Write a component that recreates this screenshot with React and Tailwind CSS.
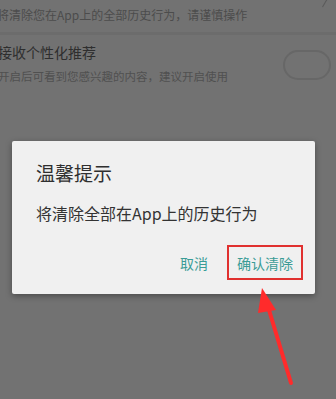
import React from "react";

export default function App() {
  const font = { fontFamily: '"Noto Sans CJK SC", "Noto Sans", sans-serif' };
  return (
    <div className="relative w-[336px] h-[399px] overflow-hidden bg-[#727272]" style={font}>
      {/* background page (dimmed) */}
      <div className="flex flex-col">
        <div className="relative h-[32px] flex items-start">
          <p className="text-[12px] leading-none text-[#4c4c4c] mt-[9px] -ml-[3px] whitespace-nowrap">将清除您在App上的全部历史行为，请谨慎操作</p>
          <div className="absolute right-[10px] -top-[4px] w-[8px] h-[10px] border-r border-[#5a5a5a] rotate-[30deg]" />
        </div>
        <div className="h-[3px] bg-[#6c6c6c]" />
        <div className="flex items-start justify-between h-[60px]">
          <div className="flex flex-col -ml-[2px]">
            <p className="text-[14px] leading-none text-[#2e2e2e] mt-[10px] whitespace-nowrap">接收个性化推荐</p>
            <p className="text-[11.5px] leading-none text-[#505050] mt-[12px] whitespace-nowrap">开启后可看到您感兴趣的内容，建议开启使用</p>
          </div>
          <div className="w-[48px] h-[30px] rounded-full border-2 border-[#676767] mr-[5px] mt-[15px]" />
        </div>
      </div>

      {/* dialog */}
      <div className="absolute left-[12px] top-[141px] w-[303px] h-[153px] bg-[#f0f0f0] rounded-[2px] shadow-[0_2px_6px_rgba(0,0,0,0.35)] flex flex-col">
        <p className="text-[19px] leading-none text-[#2f2f2f] ml-[24px] mt-[22px]">温馨提示</p>
        <p className="text-[16px] leading-none text-[#333333] ml-[24px] mt-[23px]">将清除全部在App上的历史行为</p>
        <div className="flex justify-end items-center mt-[24px] mr-[12px]">
          <span className="text-[14px] leading-none text-[#3a9c96] mr-[19px]">取消</span>
          <div className="w-[76px] h-[35px] border-2 border-[#e0302f] flex items-center justify-center">
            <span className="text-[14px] leading-none text-[#3a9c96]">确认清除</span>
          </div>
        </div>
      </div>

      {/* red arrow */}
      <svg className="absolute left-0 top-0" width="336" height="399" viewBox="0 0 336 399">
        <line x1="291" y1="383" x2="266" y2="300" stroke="#ff2b2b" strokeWidth="4" strokeLinecap="round" />
        <polygon points="262,288 276,310 258,313" fill="#ff2b2b" />
      </svg>
    </div>
  );
}
